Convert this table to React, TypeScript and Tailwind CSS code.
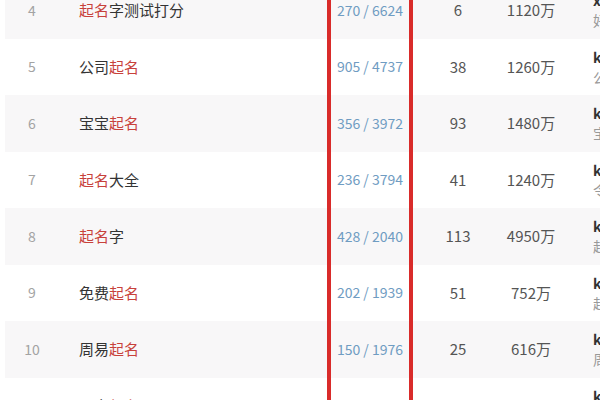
const rows = [
  { rank: 4, pre: '', hl: '起名', post: '字测试打分', ratio: '270 / 6624', count: '6', volume: '1120万', site: 'x', sub: '好' },
  { rank: 5, pre: '公司', hl: '起名', post: '', ratio: '905 / 4737', count: '38', volume: '1260万', site: 'k', sub: '公' },
  { rank: 6, pre: '宝宝', hl: '起名', post: '', ratio: '356 / 3972', count: '93', volume: '1480万', site: 'k', sub: '宝' },
  { rank: 7, pre: '', hl: '起名', post: '大全', ratio: '236 / 3794', count: '41', volume: '1240万', site: 'k', sub: '令' },
  { rank: 8, pre: '', hl: '起名', post: '字', ratio: '428 / 2040', count: '113', volume: '4950万', site: 'k', sub: '起' },
  { rank: 9, pre: '免费', hl: '起名', post: '', ratio: '202 / 1939', count: '51', volume: '752万', site: 'k', sub: '起' },
  { rank: 10, pre: '周易', hl: '起名', post: '', ratio: '150 / 1976', count: '25', volume: '616万', site: 'k', sub: '周' },
  { rank: 11, pre: '八字', hl: '起名', post: '', ratio: '183 / 1869', count: '15', volume: '2940万', site: 'k', sub: '八' },
];

export default function App() {
  return (
    <div
      className="w-[600px] h-[400px] overflow-hidden bg-white"
      style={{ fontFamily: '"Noto Sans CJK SC", "Noto Sans", sans-serif' }}
    >
      <div className="mt-[-18px] pl-[5px]">
        {rows.map((r, i) => (
          <div
            key={r.rank}
            className={`flex h-[56.5px] items-center text-[15px] ${i % 2 === 0 ? 'bg-[#f8f7f8]' : 'bg-white'}`}
          >
            <div className="w-[54px] shrink-0 text-center text-[14px] text-[#a3a3a3]">{r.rank}</div>
            <div className="w-[268px] shrink-0 pl-[20px] text-[#333]">
              {r.pre}
              <span className="text-[#c8413b]">{r.hl}</span>
              {r.post}
            </div>
            <div className="h-full w-[86px] shrink-0 flex items-center justify-center border-x-4 border-[#d92b2a] text-[14px] text-[#6f9cc2]">
              {r.ratio}
            </div>
            <div className="w-[90px] shrink-0 text-center text-[#555]">{r.count}</div>
            <div className="w-[56px] shrink-0 text-center text-[#555]">{r.volume}</div>
            <div className="shrink-0 pl-[34px] leading-[20px] whitespace-nowrap">
              <div className="text-[14px] font-bold text-[#333]">{r.site}</div>
              <div className="text-[14px] text-[#999]">{r.sub}</div>
            </div>
          </div>
        ))}
      </div>
    </div>
  );
}
